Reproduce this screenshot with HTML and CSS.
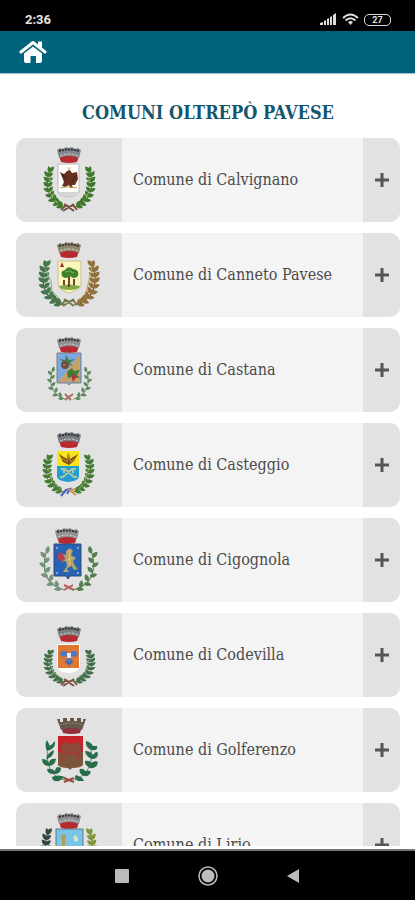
FILE: index.html
```html
<!DOCTYPE html>
<html lang="it">
<head>
<meta charset="utf-8">
<meta name="viewport" content="width=device-width, initial-scale=1">
<title>Comuni Oltrepò Pavese</title>
<link rel="stylesheet" href="styles.css">
</head>
<body>
<svg class="defs" aria-hidden="true">
  <defs>
    <path id="leaf" d="M0 1C-3-1-2-4 0-6C2-4 3-1 0 1"/>
    <g id="dense">
      <path d="M49 69C35 65 27 53 34 31" fill="none" stroke="#5b5134" stroke-width="1"/>
      <use href="#leaf" transform="translate(46 68) rotate(-105)"/><use href="#leaf" transform="translate(46 67) rotate(-40)"/>
      <use href="#leaf" transform="translate(42 65) rotate(-115)"/><use href="#leaf" transform="translate(42 65) rotate(-20)"/>
      <use href="#leaf" transform="translate(38 62) rotate(-95)"/><use href="#leaf" transform="translate(38 62) rotate(10)"/>
      <use href="#leaf" transform="translate(35 58) rotate(-80)"/><use href="#leaf" transform="translate(35 58) rotate(25)"/>
      <use href="#leaf" transform="translate(33 53) rotate(-65)"/><use href="#leaf" transform="translate(33 53) rotate(40)"/>
      <use href="#leaf" transform="translate(32 48) rotate(-50)"/><use href="#leaf" transform="translate(32 48) rotate(50)"/>
      <use href="#leaf" transform="translate(32 43) rotate(-45)"/><use href="#leaf" transform="translate(32 43) rotate(55)"/>
      <use href="#leaf" transform="translate(32 38) rotate(-35)"/><use href="#leaf" transform="translate(32 38) rotate(60)"/>
      <use href="#leaf" transform="translate(34 34) rotate(-15)"/><use href="#leaf" transform="translate(34 33) rotate(40)"/>
    </g>
    <g id="sparse">
      <path d="M49 69C35 65 27 53 34 31" fill="none" stroke="#6b7a55" stroke-width="1"/>
      <use href="#leaf" transform="translate(46 68) rotate(-95)"/><use href="#leaf" transform="translate(43 66) rotate(-10)"/>
      <use href="#leaf" transform="translate(39 63) rotate(-105)"/><use href="#leaf" transform="translate(37 60) rotate(15)"/>
      <use href="#leaf" transform="translate(34 56) rotate(-75)"/><use href="#leaf" transform="translate(33 52) rotate(40)"/>
      <use href="#leaf" transform="translate(32 47) rotate(-55)"/><use href="#leaf" transform="translate(32 43) rotate(45)"/>
      <use href="#leaf" transform="translate(32 38) rotate(-40)"/><use href="#leaf" transform="translate(34 34) rotate(12)"/>
    </g>
    <g id="crown">
      <path d="M43 18L63 18L61 24Q53 26 45 24Z" fill="#b72a30"/>
      <path d="M41 12L44 10L47 11L50 9L53 10L56 9L59 11L62 10L65 12L63 20Q53 16 43 20Z" fill="currentColor"/>
      <path d="M43 13Q53 10 63 13" fill="none" stroke="#2f3338" stroke-width="2" stroke-dasharray="2 1"/>
      <path d="M44 18Q53 14 62 18" fill="none" stroke="#c9cccd" stroke-width="1" stroke-dasharray="3 1"/>
    </g>
    <g id="ribbon">
      <path d="M45 72L50 67L53 69L57 67L61 72M48 66L58 73M58 66L47 73" fill="none" stroke="currentColor" stroke-width="2"/>
    </g>
    <symbol id="plus" viewBox="0 0 16 16"><path d="M8 1V15M1 8H15" stroke="currentColor" stroke-width="3" fill="none"/></symbol>
  </defs>
</svg>

<div class="status">
  <span class="time">2:36</span>
  <span class="indicators">
    <svg width="17" height="13" viewBox="0 0 17 13" fill="#ddd" aria-hidden="true"><path d="M0 12V10L3 9V12ZM4 12V8L6 7V12ZM7 12V6L9 5V12ZM10 12V4L12 3V12ZM13 12V2L16 0V12Z"/></svg>
    <svg width="17" height="13" viewBox="0 0 17 13" fill="none" stroke="#ddd" stroke-width="2" aria-hidden="true"><path d="M1 5Q8.500-2 16 5M3.500 7.500Q8.500 3 13.500 7.500"/><path d="M6 9Q8.500 7 11 9L8.500 12Z" fill="#ddd" stroke="none"/></svg>
    <span class="battery">27</span>
  </span>
</div>

<header class="topbar">
  <a class="home" href="#" aria-label="Home">
    <svg width="28" height="24" viewBox="0 0 28 24" aria-hidden="true"><path d="M2 12L14 2.500L26 12" fill="none" stroke="#fff" stroke-width="3" stroke-linecap="round" stroke-linejoin="round"/><path d="M19 1.500H23V8L19 5ZM5 13.500L14 6.500L23 13.500V21Q23 23 21 23H17V16H11.500V23H7Q5 23 5 21Z" fill="#fff"/></svg>
  </a>
</header>

<main class="content">
  <h1>COMUNI OLTREPÒ PAVESE</h1>
  <ul class="list">
    <li><button class="row" type="button" aria-expanded="false">
      <span class="crest"><svg viewBox="0 0 106 84" aria-hidden="true">
        <g fill="#3f7a2c"><use href="#dense"/><use href="#dense" transform="matrix(-1 0 0 1 107 0)"/></g>
        <g fill="#8eae55"><circle cx="34" cy="42" r="1"/><circle cx="36" cy="57" r="1"/><circle cx="73" cy="42" r="1"/><circle cx="71" cy="57" r="1"/><circle cx="41" cy="64" r="1"/></g>
        <use href="#ribbon" color="#76523f"/><use href="#crown" color="#80868c"/>
        <path d="M42 26H63V53Q63 58 53 59Q42 58 42 53Z" fill="#fff" stroke="#b9bbb8"/>
        <path d="M43 54H62Q61 58 53 58Q44 58 43 54" fill="#d3d7d6"/>
        <path d="M44 34L48 36L51 33L54 32L56 35L61 34L62 41L59 47H56L57 50H54L53 47L49 49L46 48L48 44Z" fill="#67301f"/>
        <path d="M46 37L51 41M60 37L56 44" stroke="#351d1a"/><path d="M44 50Q53 47 61 50" stroke="#c2a64f" fill="none"/><path d="M51 29L53 32L55 29" stroke="#e8ba68" fill="none"/>
      </svg></span><span class="name">Comune di Calvignano</span><span class="more"><svg width="16" height="16" aria-hidden="true"><use href="#plus"/></svg></span></button></li>

    <li><button class="row" type="button" aria-expanded="false">
      <span class="crest"><svg viewBox="0 0 106 84" aria-hidden="true">
        <g transform="matrix(1.180 0 0 1.100 -10 -4)"><use href="#dense" fill="#46764b"/><use href="#dense" fill="#94713a" transform="matrix(-1 0 0 1 107 0)"/></g>
        <path d="M29 36L35 48L36 58L44 66" stroke="#8ea884" fill="none"/><path d="M76 35L73 47L70 60L63 67" stroke="#bf9c59" fill="none"/>
        <use href="#ribbon" color="#72784c"/><use href="#crown" color="#94866e"/>
        <path d="M42 28H65V51Q65 57 53 60Q42 57 42 51Z" fill="#faf4bd" stroke="#c8bf8d"/>
        <path d="M43 53Q53 50 64 53Q63 57 53 57Q44 57 43 53" fill="#83a749"/>
        <path d="M44 34L46 29L48 34Z" fill="#9d2930"/><path d="M53 42V54M48 47V52M58 46V52" stroke="#704529" stroke-width="2"/>
        <path d="M46 43Q44 38 49 37Q52 32 57 36Q64 37 62 43Q58 47 54 43Q49 47 46 43" fill="#3f812c"/><path d="M49 39L53 38L58 40" stroke="#85a84f" fill="none"/>
      </svg></span><span class="name">Comune di Canneto Pavese</span><span class="more"><svg width="16" height="16" aria-hidden="true"><use href="#plus"/></svg></span></button></li>

    <li><button class="row" type="button" aria-expanded="false">
      <span class="crest"><svg viewBox="0 0 106 84" aria-hidden="true">
        <g fill="#5c8b61" transform="matrix(.85 0 0 .8 8 16)"><use href="#sparse"/><use href="#sparse" transform="matrix(-1 0 0 1 107 0)"/></g>
        <path d="M49 66L55 72M57 66L49 72" stroke="#b16a63" stroke-width="2"/><use href="#crown" color="#8b8d8e"/>
        <path d="M41 25H65V55H55L53 57L51 55H41Z" fill="#7ba9e5" stroke="#837e71"/>
        <path d="M64 26V54H42Z" fill="#c2a16a"/>
        <path d="M49 35L43 31L49 32L50 27L53 32L59 31L54 35L57 38L51 36L44 39Z" fill="#447e51"/>
        <circle cx="49" cy="37" r="4" fill="#70503b"/><circle cx="48" cy="37" r="1" fill="#d17758"/>
        <path d="M51 44L56 40L58 43L64 42L61 47L64 50L56 49L52 50Z" fill="#3e7e3c"/>
        <path d="M55 46L61 48L57 54Z" fill="#b52e38"/>
      </svg></span><span class="name">Comune di Castana</span><span class="more"><svg width="16" height="16" aria-hidden="true"><use href="#plus"/></svg></span></button></li>

    <li><button class="row" type="button" aria-expanded="false">
      <span class="crest"><svg viewBox="0 0 106 84" aria-hidden="true">
        <g fill="#437c35" transform="matrix(1 0 0 .93 -1 5)"><use href="#dense"/><use href="#dense" transform="matrix(-1 0 0 1 107 0)"/></g>
        <path d="M32 45L36 58L45 67M73 45L69 58L62 67" fill="none" stroke="#87aa5b"/>
        <path d="M45 73L50 67L54 66L51 71" stroke="#4961c2" stroke-width="2" fill="none"/><path d="M52 66L60 72M59 66L53 68" stroke="#c79950" stroke-width="2"/><use href="#crown" color="#777d83"/>
        <path d="M41 28H63V54Q62 58 52 59Q42 58 41 54Z" fill="#249dd2"/>
        <path d="M41 28H63V43H41Z" fill="#f7e51a"/>
        <path d="M43 31L51 36L52 29L54 36L62 31L58 38L53 42L47 39Z" fill="#835020"/><path d="M46 35L51 39L53 32L55 39L60 35" fill="none" stroke="#c59126"/>
        <path d="M45 46H49L58 54H61M60 46H56L47 54H44M48 46V50M57 46V50" fill="none" stroke="#a8c8a2" stroke-width="2"/>
      </svg></span><span class="name">Comune di Casteggio</span><span class="more"><svg width="16" height="16" aria-hidden="true"><use href="#plus"/></svg></span></button></li>

    <li><button class="row" type="button" aria-expanded="false">
      <span class="crest"><svg viewBox="0 0 106 84" aria-hidden="true">
        <g transform="matrix(1.120 0 0 1.070 -7 -2)"><use href="#sparse" fill="#709578"/><use href="#sparse" fill="#50804b" transform="matrix(-1 0 0 1 107 0)"/></g>
        <path d="M48 67L58 72M57 67L48 72" stroke="#b75e5b" stroke-width="2"/><g transform="translate(-2 1)"><use href="#crown" color="#92918e"/></g>
        <path d="M38 26H65V58H54L52 61L50 58H38Z" fill="#2563b4" stroke="#344a76"/>
        <path d="M50 33L54 30L57 33L55 37L60 40L57 43L59 48L62 51L58 52L55 47L51 51L53 54H47L51 48L50 43L45 44L49 40L46 36L50 37Z" fill="#b7a26a"/>
        <path d="M53 32L54 49M56 40L51 42" stroke="#e0c57a"/><path d="M42 36L45 34L47 37L49 41L46 44L42 41Z" fill="#b83d4e"/>
        <g fill="#a9bddc"><circle cx="41" cy="30" r="1"/><circle cx="62" cy="30" r="1"/><circle cx="41" cy="55" r="1"/><circle cx="62" cy="55" r="1"/></g>
      </svg></span><span class="name">Comune di Cigognola</span><span class="more"><svg width="16" height="16" aria-hidden="true"><use href="#plus"/></svg></span></button></li>

    <li><button class="row" type="button" aria-expanded="false">
      <span class="crest"><svg viewBox="0 0 106 84" aria-hidden="true">
        <g fill="#3f704a" transform="matrix(1 0 0 .8 0 14)"><use href="#dense"/><use href="#dense" transform="matrix(-1 0 0 1 107 0)"/></g>
        <path d="M33 49L38 60L47 66M73 47L69 59L60 66" fill="none" stroke="#91a68b"/>
        <use href="#ribbon" color="#7c5548"/><g transform="translate(0 4)"><use href="#crown" color="#7d8081"/></g>
        <path d="M41 31H64V53Q63 59 53 60Q42 59 41 53Z" fill="#fff"/><path d="M42 32H63V55H42Z" fill="#df7835"/>
        <path d="M53 41L50 38L45 38L44 42L47 44L52 43L49 49L53 53L57 49L54 43L60 44L62 41L60 38L56 38Z" fill="#5478b5"/>
        <path d="M51 40H55V45H51Z" fill="#e5eaf0"/><path d="M49 48L53 51L57 48" stroke="#39588f" fill="none"/>
      </svg></span><span class="name">Comune di Codevilla</span><span class="more"><svg width="16" height="16" aria-hidden="true"><use href="#plus"/></svg></span></button></li>

    <li><button class="row" type="button" aria-expanded="false">
      <span class="crest"><svg viewBox="0 0 106 84" aria-hidden="true">
        <g id="oak" fill="#286e49"><path d="M49 72C35 69 29 57 32 36M74 36C79 57 70 68 58 72" fill="none" stroke="#638068"/>
          <path d="M31 43Q28 37 31 32Q33 36 34 38L39 33Q40 41 31 43M30 51Q31 45 38 42Q38 49 30 51M32 58Q26 57 26 51Q31 51 33 55Q34 50 40 51Q39 58 32 58M38 66Q31 66 31 61Q36 60 39 63Q40 57 45 60Q45 66 38 66M43 73Q36 74 36 69Q42 66 49 69Z"/>
          <path d="M76 42Q69 40 70 33Q75 34 77 38L81 38Q82 43 76 42M76 51Q70 49 69 43Q75 43 77 47Q80 42 82 45Q82 51 76 51M74 60Q68 57 69 53Q74 52 75 55Q79 52 82 54Q81 61 74 60M68 68Q62 65 64 61Q68 60 69 63Q74 62 75 64Q73 69 68 68M62 73Q57 70 60 67Q67 69 68 73Z"/></g>
        <path d="M48 70L58 74M58 70L48 74" stroke="#934c40" stroke-width="2"/>
        <path d="M45 18H66L64 25Q55 27 47 25Z" fill="#91303b"/><path d="M41 11H44V14H47V10H51V13H54V10H58V13H61V10H65V14H67V11H70L66 22Q55 18 45 22Z" fill="#66594c"/><path d="M44 17Q55 13 67 17" fill="none" stroke="#9a8872" stroke-dasharray="2 1"/>
        <path d="M42 28H67V57Q65 60 56 60L54 62L52 60Q44 60 42 57Z" fill="#7c563a"/><path d="M42 28H67V44H42Z" fill="#c52229"/>
        <path d="M44 41L46 35L51 34L55 37L60 34L65 37L65 43L62 46L64 53L60 47L53 47L48 52L49 45Z" fill="#8d493b"/><path d="M43 46L49 44L53 46L61 45L66 48M46 46V54M62 46V53" fill="none" stroke="#ae302b"/>
      </svg></span><span class="name">Comune di Golferenzo</span><span class="more"><svg width="16" height="16" aria-hidden="true"><use href="#plus"/></svg></span></button></li>

    <li><button class="row" type="button" aria-expanded="false">
      <span class="crest"><svg viewBox="0 0 106 84" aria-hidden="true">
        <g transform="matrix(1 0 0 1.100 -2 -6)"><use href="#dense" fill="#35463f"/><use href="#dense" fill="#7d983b" transform="matrix(-1 0 0 1 110 0)"/></g>
        <g transform="translate(0 1)"><use href="#crown" color="#8e9091"/></g>
        <path d="M40 26H67V56Q66 61 53 63Q41 61 40 56Z" fill="#79c5e6" stroke="#64788a"/>
        <path d="M45 35V32H50V35L49 36V56H46V36Z" fill="#b69b51"/><path d="M57 34L60 32L62 35V38L59 39Z" fill="#d4e3cf"/><path d="M41 48Q53 43 66 48V56Q53 64 41 56Z" fill="#679b55"/>
      </svg></span><span class="name">Comune di Lirio</span><span class="more"><svg width="16" height="16" aria-hidden="true"><use href="#plus"/></svg></span></button></li>
  </ul>
</main>

<nav class="system" aria-label="Sistema">
  <button type="button" aria-label="Recenti"><svg width="20" height="20" viewBox="0 0 20 20"><rect x="3" y="3" width="14" height="14" rx="1" fill="#bcbcbc"/></svg></button>
  <button type="button" aria-label="Home"><svg width="20" height="20" viewBox="0 0 20 20"><circle cx="10" cy="10" r="9" fill="none" stroke="#bcbcbc" stroke-width="1.500"/><circle cx="10" cy="10" r="6.500" fill="#bcbcbc"/></svg></button>
  <button type="button" aria-label="Indietro"><svg width="20" height="20" viewBox="0 0 20 20"><path d="M3 10L15 3V17Z" fill="#bcbcbc"/></svg></button>
</nav>
</body>
</html>
```
FILE: styles.css
```css
* { box-sizing: border-box; }

body {
  margin: 0;
  height: 100vh;
  display: flex;
  flex-direction: column;
  background: #fff;
  color: #4b4b4b;
  font-family: "DejaVu Serif Condensed", "DejaVu Serif", serif;
}

button {
  margin: 0;
  padding: 0;
  border: 0;
  background: none;
  color: inherit;
  font: inherit;
  cursor: pointer;
}

svg { display: block; }

.defs {
  position: absolute;
  width: 0;
  height: 0;
}

.status {
  flex: none;
  display: flex;
  justify-content: space-between;
  align-items: center;
  height: 31px;
  padding: 8px 24px 0 25px;
  background: #000;
  color: #e4e4e4;
  font-family: Roboto, sans-serif;
  font-weight: 700;
}

.time { font-size: 13px; }

.indicators {
  display: flex;
  align-items: center;
  gap: 5px;
}

.battery {
  width: 27px;
  height: 12px;
  border: 1px solid #ddd;
  border-radius: 5px;
  font-size: 9px;
  line-height: 10px;
  text-align: center;
}

.topbar {
  flex: none;
  display: flex;
  align-items: center;
  height: 42px;
  padding: 0 19px;
  background: #00637b;
  box-shadow: 0 1px 1px #a9c3cb;
}

.content {
  flex: 1;
  min-height: 0;
  margin-bottom: 3px;
  padding: 0 15px 0 16px;
  overflow-y: auto;
  scrollbar-width: none;
}

h1 {
  margin: 28px 0 13px;
  color: #14566e;
  font-size: 18px;
  line-height: 24px;
  font-weight: 700;
  text-align: center;
}

.list {
  display: grid;
  gap: 11px;
  margin: 0;
  padding: 0 0 16px;
  list-style: none;
}

.row {
  display: grid;
  grid-template-columns: 106px 1fr 37px;
  width: 100%;
  min-height: 84px;
  border-radius: 10px;
  overflow: hidden;
  background: #f4f4f4;
  text-align: left;
}

.crest { background: #e2e2e2; }

.name {
  align-self: center;
  padding: 0 11px;
  font-size: 16px;
  line-height: 24px;
}

.more {
  display: grid;
  place-items: center;
  background: #e2e2e2;
  color: #555;
}

.system {
  flex: none;
  display: flex;
  justify-content: center;
  align-items: center;
  gap: 66px;
  height: 51px;
  border-top: 2px solid #777;
  background: #000;
}
```
